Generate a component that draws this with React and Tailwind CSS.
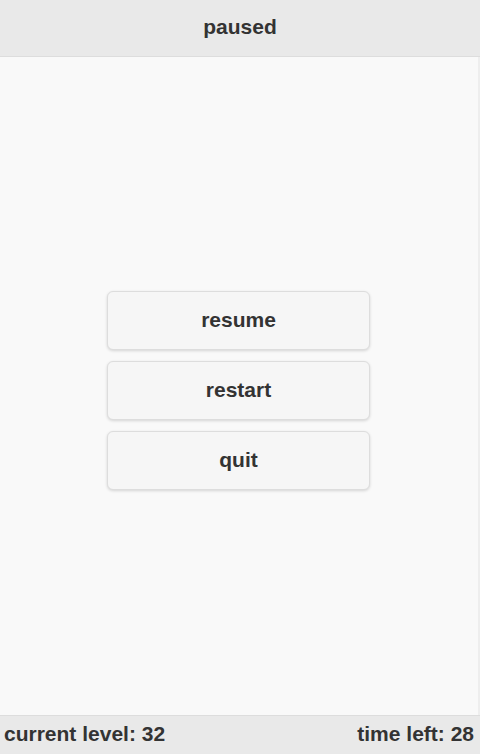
import React from "react";

const PauseButton = ({ label }) => (
  <button className="h-[59px] w-[263px] rounded-[6px] border border-[#dddddd] bg-[#f6f6f6] text-[21px] font-bold text-[#333333] shadow-[0_1px_3px_rgba(0,0,0,0.15)]">
    {label}
  </button>
);

const App = () => {
  return (
    <div
      className="flex h-[754px] w-[480px] flex-col overflow-hidden bg-[#f9f9f9]"
      style={{ fontFamily: '"Liberation Sans", Arial, sans-serif' }}
    >
      {/* Header */}
      <div className="flex h-[57px] shrink-0 items-center justify-center border-b border-[#dddddd] bg-[#e9e9e9]">
        <h1 className="-mt-[3px] text-[21px] font-bold text-[#333333]">paused</h1>
      </div>

      {/* Menu */}
      <div className="flex flex-1 flex-col items-center justify-center gap-[11px] border-r-2 border-[#eeeeee] pt-[8px] pr-[1px]">
        <PauseButton label="resume" />
        <PauseButton label="restart" />
        <PauseButton label="quit" />
      </div>

      {/* Footer */}
      <div className="flex h-[39px] shrink-0 items-center justify-between border-t border-[#dddddd] bg-[#e9e9e9] pb-[3px] pl-[4px] pr-[6px]">
        <span className="text-[21px] font-bold text-[#333333]">current level: 32</span>
        <span className="text-[21px] font-bold text-[#333333]">time left: 28</span>
      </div>
    </div>
  );
};

export default App;
